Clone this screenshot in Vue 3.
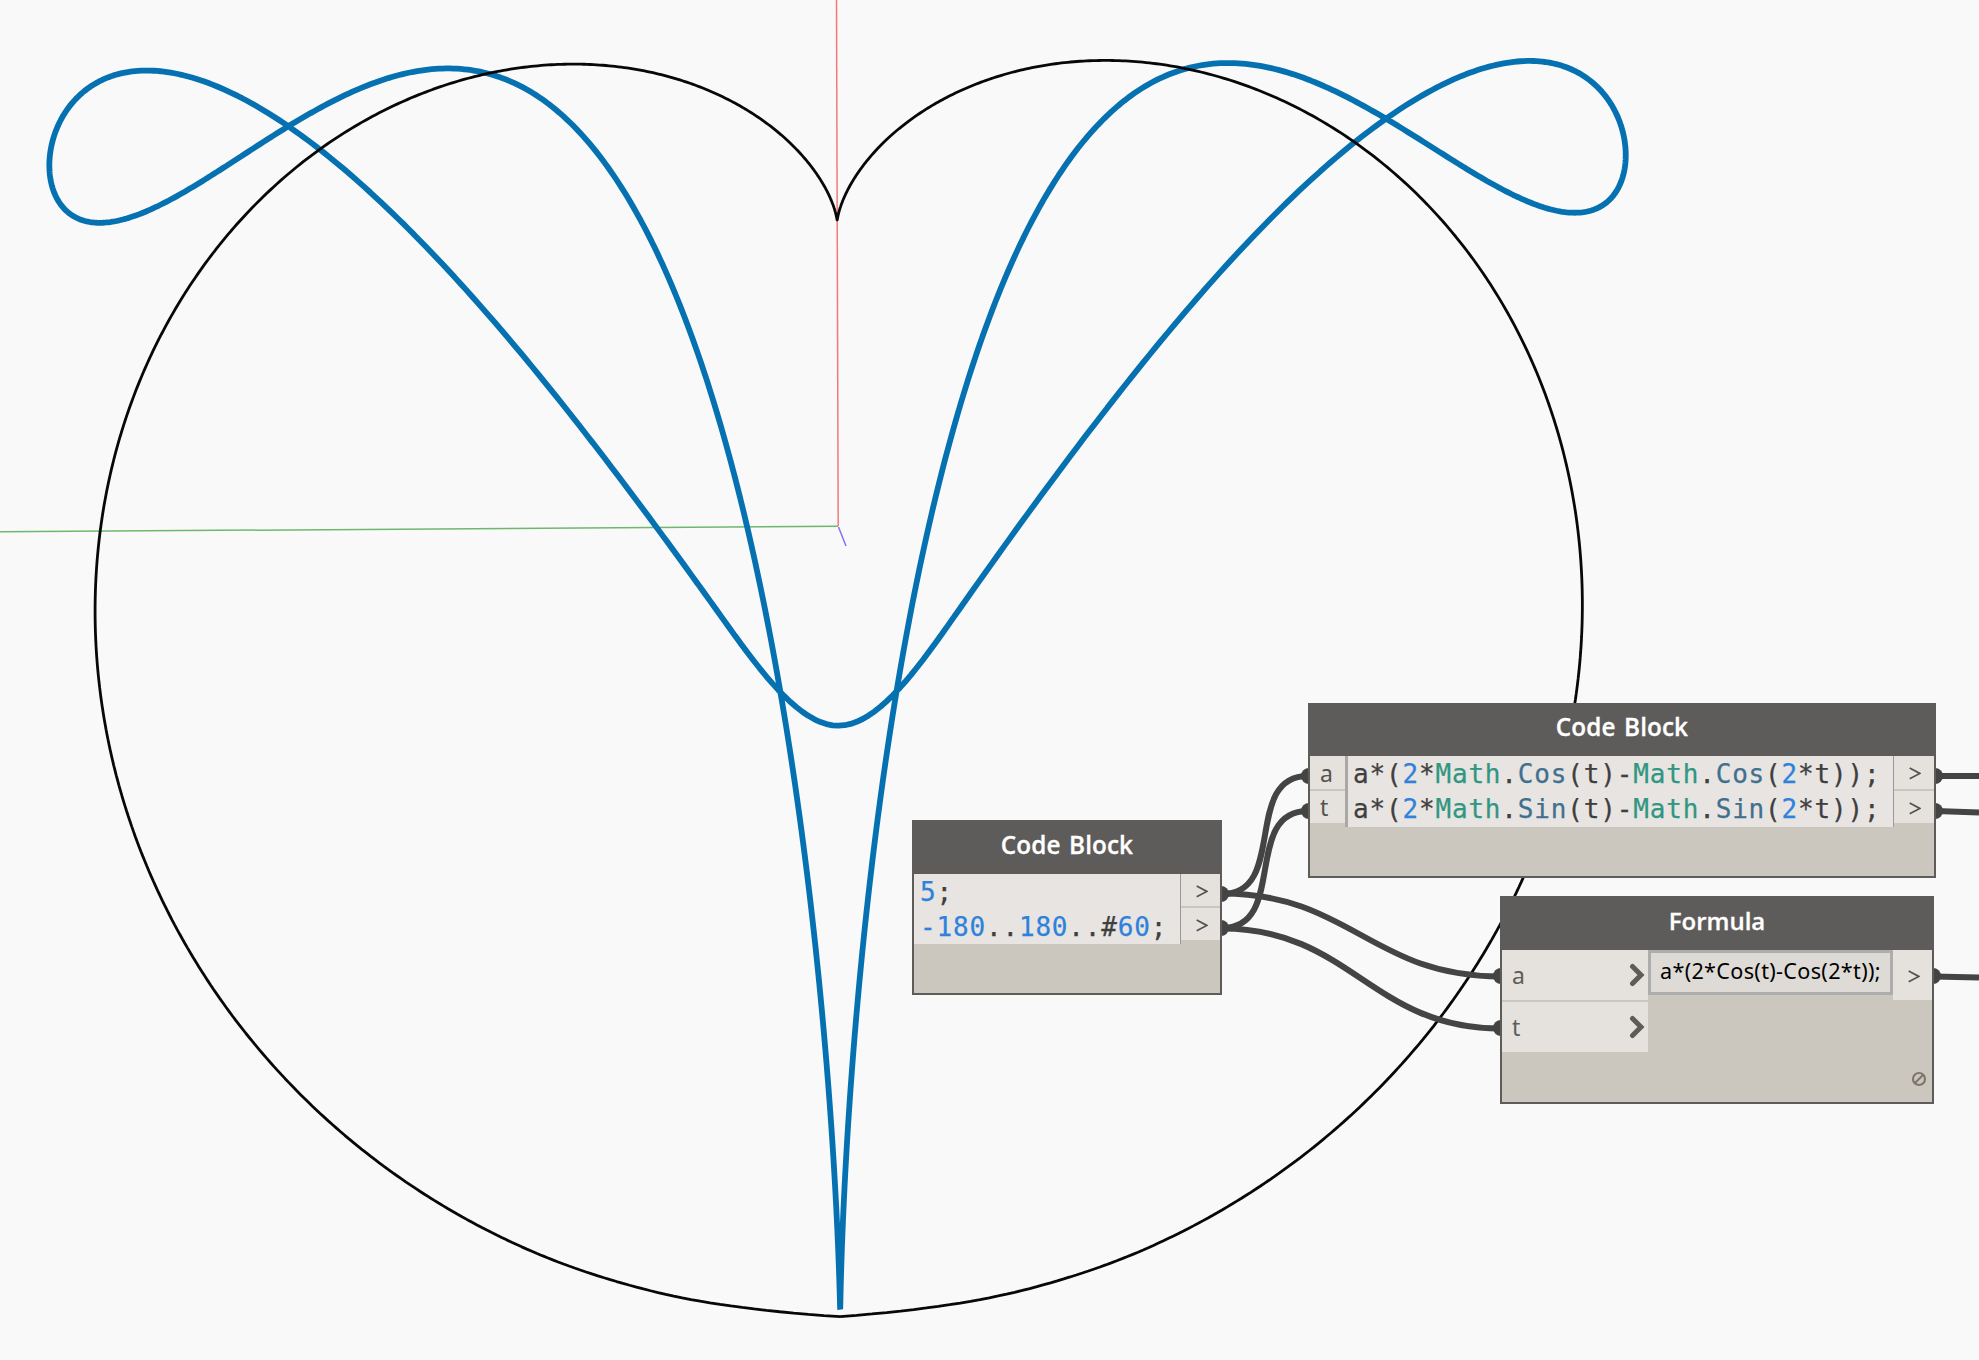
<script setup>
const K = 'k', N = 'n', C = 'c', M = 'm'

// 60 values from -180 to 180, the range fed into both formulas
const range = Array.from({ length: 60 }, (_, i) => -180 + (360 * i) / 59)
const rad = deg => (deg * Math.PI) / 180
const fx = t => 2 * Math.cos(t) - Math.cos(2 * t)
const fy = t => 2 * Math.sin(t) - Math.sin(2 * t)

// Camera projection of the ground plane to the viewport
function project([x, y]) {
  const w = 1 - 0.0365 * x + 0.00026 * y
  return [(838 - 31.4 * x - 291.2 * y) / w, (525.04 - 311.94 * x + 2.04 * y) / w]
}
const toPath = pts => 'M' + pts.map(q => project(q).map(v => v.toFixed(2)).join(' ')).join('L')

// De Boor evaluation of a clamped cubic B-spline
function clamped(pts, steps) {
  const p = 3, n = pts.length
  const knot = i => Math.min(Math.max(i - p, 0), n - p)
  const out = []
  for (let s = 0; s <= steps; s++) {
    const u = ((n - p) * s) / steps
    const k = Math.min(Math.floor(u), n - p - 1) + p
    const d = []
    for (let j = 0; j <= p; j++) d.push([...pts[j + k - p]])
    for (let r = 1; r <= p; r++)
      for (let j = p; j >= r; j--) {
        const lo = knot(j + k - p), hi = knot(j + 1 + k - r)
        const a = (u - lo) / (hi - lo)
        d[j] = [0, 1].map(i => (1 - a) * d[j - 1][i] + a * d[j][i])
      }
    out.push(d[p])
  }
  return out
}

// Closed uniform cubic B-spline
function periodic(pts, per) {
  const n = pts.length, out = []
  for (let k = 0; k < n; k++)
    for (let s = 0; s < per; s++) {
      const u = s / per
      const b = [(1 - u) ** 3, 3 * u ** 3 - 6 * u ** 2 + 4, -3 * u ** 3 + 3 * u ** 2 + 3 * u + 1, u ** 3]
      out.push([0, 1].map(i => b.reduce((sum, w, j) => sum + (w / 6) * pts[(k + j) % n][i], 0)))
    }
  return out
}

const cardioid = toPath(clamped(range.map(t => [fx(rad(t)), fy(rad(t))]), 1140))
// The Formula node reads the angle as radians, Math.Sin as degrees
const blueCurve = toPath(periodic(range.slice(0, 59).map(t => [fx(t), fy(rad(t))]), 20)) + 'Z'

const wires = [
  'M1222 894C1288 894 1242 776 1308 776',
  'M1222 928C1288 928 1242 811 1308 811',
  'M1222 893.5C1350 893.5 1372 976.5 1500 976.5',
  'M1222 928.5C1350 928.5 1372 1028.5 1500 1028.5',
  'M1936 776H1979',
  'M1936 811L1979 812.5',
  'M1934 976.5L1979 977.5'
]
const pins = [[1221, 894], [1221, 928], [1309, 776], [1309, 811], [1935, 776], [1935, 811], [1501, 976], [1501, 1028], [1933, 976]]

const trig = fn => [
  [K, 'a*('], [N, '2'], [K, '*'], [C, 'Math'], [K, '.'], [M, fn], [K, '(t)-'],
  [C, 'Math'], [K, '.'], [M, fn], [K, '('], [N, '2'], [K, '*t));']
]
const blocks = [
  { id: 'range', inputs: [], lines: [[[N, '5'], [K, ';']], [[N, '-180'], [K, '..'], [N, '180'], [K, '..#'], [N, '60'], [K, ';']]] },
  { id: 'trig', inputs: ['a', 't'], lines: [trig('Cos'), trig('Sin')] }
]
</script>

<template>
  <main class="canvas">
    <svg class="scene" width="1979" height="1360" viewBox="0 0 1979 1360" fill="none">
      <path d="M836.5 0L838.2 526" stroke="#f03c3c" stroke-opacity=".68" stroke-width="1.5" />
      <path d="M0 531.8L838 526.3" stroke="#4ca64c" stroke-opacity=".8" stroke-width="1.5" />
      <path d="M838.5 527L846 546" stroke="#5a46f5" stroke-opacity=".75" stroke-width="1.5" />
      <path :d="blueCurve" stroke="#0571b1" stroke-width="5.8" stroke-linejoin="bevel" />
      <path :d="cardioid" stroke="#080808" stroke-width="2.8" stroke-linejoin="bevel" />
      <g stroke="#444" stroke-width="6"><path v-for="w in wires" :key="w" :d="w" /></g>
      <circle v-for="p in pins" :key="p.join()" :cx="p[0]" :cy="p[1]" r="8" fill="#444" />
    </svg>

    <section v-for="b in blocks" :key="b.id" class="node" :class="b.id">
      <header class="title">Code Block</header>
      <div class="row">
        <div v-if="b.inputs.length" class="ports in">
          <span v-for="i in b.inputs" :key="i" class="port">{{ i }}</span>
        </div>
        <div class="code">
          <div v-for="(l, i) in b.lines" :key="i" class="line"><span v-for="(s, j) in l" :key="j" :class="s[0]">{{ s[1] }}</span></div>
        </div>
        <div class="ports out">
          <span v-for="i in 2" :key="i" class="port"><svg width="12" height="13" viewBox="0 0 12 13"><path d="M.7 1L10.8 6.4L.7 11.8" /></svg></span>
        </div>
      </div>
    </section>

    <section class="node formula">
      <header class="title">Formula</header>
      <div class="row">
        <div class="args">
          <div v-for="i in ['a', 't']" :key="i" class="arg">
            <span>{{ i }}</span>
            <svg width="16" height="24" viewBox="0 0 16 24"><path d="M3.5 3.5L12 12L3.5 20.5" /></svg>
          </div>
        </div>
        <div class="field">a*(2*Cos(t)-Cos(2*t));</div>
        <div class="result"><svg width="12" height="13" viewBox="0 0 12 13"><path d="M.7 1L10.8 6.4L.7 11.8" /></svg></div>
      </div>
      <svg class="lacing" width="16" height="16" viewBox="0 0 16 16"><circle cx="8" cy="8" r="6" /><path d="M4 12L12 4" /></svg>
    </section>
  </main>
</template>

<style>
body { margin: 0; background: #f9f9f9; }
</style>

<style scoped>
.canvas { position: relative; width: 1979px; height: 1360px; overflow: hidden; background: #f9f9f9; font-family: "Noto Sans", "Open Sans", sans-serif; }
.scene { display: block; }
.node { position: absolute; box-sizing: border-box; border: 2px solid #5e5c5a; background: #cbc6be; display: flex; flex-direction: column; }
.range { left: 912px; top: 820px; width: 310px; height: 175px; }
.trig { left: 1308px; top: 703px; width: 628px; height: 175px; }
.formula { left: 1500px; top: 896px; width: 434px; height: 208px; }
.title { height: 52px; flex: none; background: #5e5c5a; color: #fff; font: 600 24.3px/46px "Open Sans", sans-serif; text-align: center; letter-spacing: .1px; word-spacing: 2px; -webkit-text-stroke: .3px; }
.trig .title { height: 51px; line-height: 44px; }
.formula .title { font-size: 24px; letter-spacing: 0; }
.row { display: flex; align-items: flex-start; }
.code { flex: 1; box-sizing: border-box; height: 70px; padding: 1px 0 0 6px; background: #e7e4e1; border-right: 1px solid #999; white-space: pre; font: 26px/35px "DejaVu Sans Mono", monospace; letter-spacing: .83px; -webkit-text-stroke: .25px; }
.trig .code { height: 71px; padding-left: 5px; border-left: 3px solid #a9a8a7; }
.line { height: 35px; }
.k { color: #3f3f3f; }
.n { color: #2e82dc; }
.c { color: #319682; }
.m { color: #41708f; }
.ports { display: flex; flex-direction: column; gap: 2px; }
.ports.in { width: 35px; }
.ports.out { width: 39px; }
.trig .ports.out { width: 40px; }
.port { height: 32px; box-sizing: border-box; display: flex; align-items: center; background: #e5e2dd; }
.trig .port { height: 32.5px; }
.in .port { padding: 1px 0 0 10px; font-size: 23px; line-height: 30px; color: #55534f; }
.out .port { padding: 3px 0 0 15px; }
.port path, .result path { stroke: #55534f; stroke-width: 1.7; fill: none; }
.args { width: 146px; display: flex; flex-direction: column; gap: 2px; }
.arg { height: 50px; display: flex; align-items: center; justify-content: space-between; box-sizing: border-box; padding: 0 3px 0 10px; background: #e5e2dd; font-size: 23px; color: #5e5c5a; }
.arg path { stroke: #5e5c5a; stroke-width: 5; stroke-linecap: round; stroke-linejoin: miter; fill: none; }
.field { flex: 1; height: 45px; box-sizing: border-box; border: 3px solid #adadae; padding-left: 9px; background: #dedbd6; color: #000; font-size: 21.6px; line-height: 35px; white-space: nowrap; letter-spacing: .32px; }
.result { width: 39px; height: 50px; box-sizing: border-box; padding: 3px 0 0 15px; display: flex; align-items: center; background: #e5e2dd; }
.lacing { align-self: flex-end; margin: auto 5px 15px 0; fill: none; stroke: #7d776e; stroke-width: 2.2; }
</style>
